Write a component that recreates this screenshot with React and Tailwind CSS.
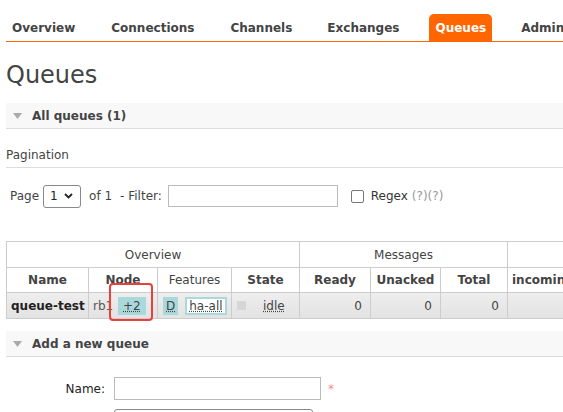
import React from "react";

const Tri = () => (
  <svg width="9" height="6" viewBox="0 0 9 6" className="shrink-0">
    <path d="M0 0 H9 L4.5 6 Z" fill="#aaa" />
  </svg>
);

export default function App() {
  return (
    <div
      className="w-[563px] h-[412px] overflow-hidden bg-white text-[#444] text-[12px]"
      style={{ fontFamily: '"DejaVu Sans", Verdana, sans-serif' }}
    >
      {/* nav */}
      <div className="ml-[6px] pt-[14px] border-b border-[#f60] flex items-end h-[42px] whitespace-nowrap overflow-hidden">
        <div className="flex items-end font-bold">
          <div className="px-[6px] h-[27px] flex items-center">Overview</div>
          <div className="ml-[24px] px-[6px] h-[27px] flex items-center">Connections</div>
          <div className="ml-[24px] px-[6px] h-[27px] flex items-center">Channels</div>
          <div className="ml-[23px] px-[6px] h-[27px] flex items-center">Exchanges</div>
          <div className="ml-[24px] px-[6px] h-[27px] flex items-center bg-[#f60] text-white rounded-t-[5px]">Queues</div>
          <div className="ml-[23px] px-[6px] h-[27px] flex items-center">Admin</div>
        </div>
      </div>

      <h1 className="ml-[6px] mt-[18px] text-[24px] leading-[30px] font-normal text-[#444]">Queues</h1>

      <div className="ml-[6px] mt-[13px] h-[26px] bg-[#f8f8f8] border-b border-[#ddd] flex items-center gap-[10px] pl-[7px] font-bold">
        <Tri />
        <span>All queues (1)</span>
      </div>

      <div className="ml-[6px] mt-[18px] pb-[4px] border-b border-[#ddd] leading-[16px]">Pagination</div>

      <div className="ml-[10px] mt-[16px] flex items-center h-[24px] whitespace-nowrap">
        <span>Page</span>
        <div className="ml-[4px] h-[23px] w-[38px] border border-[#888] rounded-[3px] flex items-center pl-[6px] gap-[6px] text-[#222]">
          <span>1</span>
          <svg width="9" height="6" viewBox="0 0 9 6">
            <path d="M1 1 L4.5 4.5 L8 1" stroke="#222" strokeWidth="1.8" fill="none" />
          </svg>
        </div>
        <span className="ml-[8px]">of 1</span>
        <span className="ml-[8px]">- Filter:</span>
        <div className="ml-[6px] h-[22px] w-[170px] border border-[#bbb]" />
        <div className="ml-[13px] w-[13px] h-[13px] border border-[#777] rounded-[2px]" />
        <span className="ml-[7px] text-[#333]">Regex</span>
        <span className="ml-[4px] text-[#999]">(?)(?)</span>
      </div>

      {/* table */}
      <div className="relative ml-[6px] mt-[33px]">
        <div className="overflow-hidden">
          <table className="border-collapse text-[12px] whitespace-nowrap" style={{ tableLayout: "fixed", width: 575 }}>
            <colgroup>
              <col style={{ width: 82 }} />
              <col style={{ width: 69 }} />
              <col style={{ width: 74 }} />
              <col style={{ width: 68 }} />
              <col style={{ width: 71 }} />
              <col style={{ width: 70 }} />
              <col style={{ width: 67 }} />
              <col style={{ width: 74 }} />
            </colgroup>
            <thead>
              <tr className="h-[26px]">
                <th colSpan={4} className="border border-[#ccc] font-normal text-center">Overview</th>
                <th colSpan={3} className="border border-[#ccc] font-normal text-center">Messages</th>
                <th className="border border-[#ccc]"></th>
              </tr>
              <tr className="h-[25px]">
                <th className="border border-[#ccc] font-bold">Name</th>
                <th className="border border-[#ccc] font-bold">Node</th>
                <th className="border border-[#ccc] font-normal">Features</th>
                <th className="border border-[#ccc] font-bold">State</th>
                <th className="border border-[#ccc] font-bold">Ready</th>
                <th className="border border-[#ccc] font-bold">Unacked</th>
                <th className="border border-[#ccc] font-bold">Total</th>
                <th className="border border-[#ccc] font-bold text-left pl-[4px] overflow-hidden">incoming</th>
              </tr>
            </thead>
            <tbody>
              <tr className="h-[26px] bg-gradient-to-b from-[#eeeeee] to-[#e2e2e2]">
                <td className="border border-[#ccc] font-bold text-[#222] pl-[4px]">queue-test</td>
                <td className="border border-[#ccc] pl-[4px] overflow-hidden">
                  <div className="flex items-center">
                    <span className="text-[#555] w-[20px] overflow-hidden">rb1</span>
                    <span className="ml-[5px] px-[5px] h-[18px] leading-[18px] bg-[#a9d9da] text-[#444] underline decoration-dotted">+2</span>
                  </div>
                </td>
                <td className="border border-[#ccc] pl-[5px]">
                  <div className="flex items-center">
                    <span className="px-[3px] h-[18px] leading-[18px] bg-[#a9d9da] underline decoration-dotted">D</span>
                    <span className="ml-[7px] px-[2px] h-[18px] leading-[14px] border-2 border-[#a9d9da] bg-white underline decoration-dotted">ha-all</span>
                  </div>
                </td>
                <td className="border border-[#ccc] pl-[5px]">
                  <div className="flex items-center">
                    <span className="w-[9px] h-[9px] bg-[#d6d6d6]" />
                    <span className="ml-[17px] underline decoration-dotted">idle</span>
                  </div>
                </td>
                <td className="border border-[#ccc] text-right pr-[8px]">0</td>
                <td className="border border-[#ccc] text-right pr-[8px]">0</td>
                <td className="border border-[#ccc] text-right pr-[8px]">0</td>
                <td className="border border-[#ccc]"></td>
              </tr>
            </tbody>
          </table>
        </div>
        <div className="absolute left-[103px] top-[42px] w-[44px] h-[38px] border-2 border-[#e8413b] rounded-[4px]" />
      </div>

      <div className="ml-[6px] mt-[12px] h-[26px] bg-[#f8f8f8] border-b border-[#ddd] flex items-center gap-[10px] pl-[7px] font-bold">
        <Tri />
        <span>Add a new queue</span>
      </div>

      <div className="mt-[20px] flex items-center">
        <div className="w-[106px] text-right pr-[1px] text-[#222]">Name:</div>
        <div className="ml-[8px] w-[207px] h-[23px] border border-[#bbb]" />
        <span className="ml-[7px] text-[#f88] text-[12px]">*</span>
      </div>
      <div className="mt-[9px] ml-[114px] w-[199px] h-[23px] border border-[#888] rounded-[3px]" />
    </div>
  );
}
